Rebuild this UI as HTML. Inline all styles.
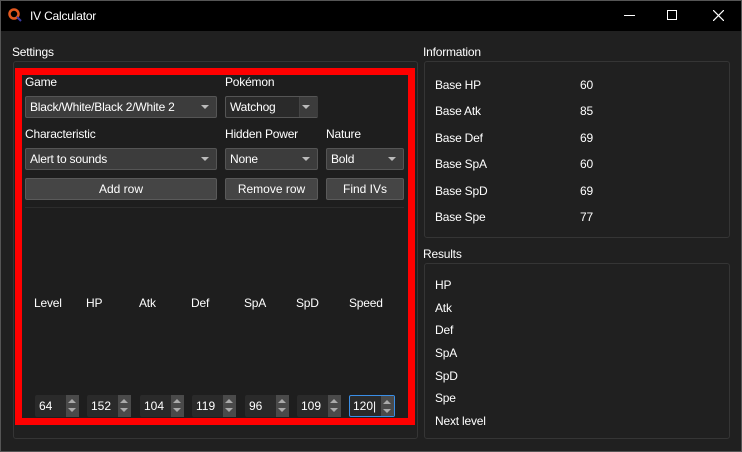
<!DOCTYPE html><html><head><style>
*{margin:0;padding:0;box-sizing:border-box}
body{width:742px;height:452px;background:#202020;font-family:"Liberation Sans",sans-serif;font-size:12px;color:#fff;position:relative;overflow:hidden}
.a{position:absolute}
.t{position:absolute;white-space:nowrap;line-height:14px;letter-spacing:-0.2px}
.grp{position:absolute;border:1px solid #353535;border-radius:3px}
.cb{position:absolute;height:22px;background:#3c3c3c;border:1px solid #555;border-radius:2px;padding-left:4px;line-height:20px;letter-spacing:-0.2px}
.cb:after{content:"";position:absolute;right:7px;top:8px;border-left:4px solid transparent;border-right:4px solid transparent;border-top:4px solid #bbb}
.btn{position:absolute;height:22px;background:#454545;border:1px solid #5a5a5a;border-radius:2px;text-align:center;line-height:20px}
.sp{position:absolute;top:395px;height:22px;width:44px;background:#2a2a2a;border-radius:2px;line-height:22px;padding-left:4px}
.sp i{position:absolute;right:0;top:0;width:13px;height:22px;background:#4a4a4a}
.sp i:before{content:"";position:absolute;left:2px;top:4px;border-left:4px solid transparent;border-right:4px solid transparent;border-bottom:4px solid #aaa}
.sp i:after{content:"";position:absolute;left:2px;top:13px;border-left:4px solid transparent;border-right:4px solid transparent;border-top:4px solid #aaa}
</style></head><body>
<div class="a" style="left:0;top:0;width:742px;height:31px;background:#000"></div>
<div class="a" style="left:0;top:0;width:742px;height:452px;border:1px solid #555;z-index:5"></div>
<svg class="a" style="left:8px;top:8px" width="14" height="14" viewBox="0 0 14 14"><circle cx="6" cy="6" r="4.5" fill="none" stroke="#e2571e" stroke-width="2.5"/><line x1="9" y1="9" x2="13" y2="13" stroke="#3a3aa0" stroke-width="2"/></svg>
<div class="t" style="left:30px;top:9px;font-size:12px">IV Calculator</div>
<div class="a" style="left:624px;top:15px;width:11px;height:1px;background:#fff"></div>
<div class="a" style="left:667px;top:10px;width:10px;height:10px;border:1px solid #fff"></div>
<svg class="a" style="left:713px;top:10px" width="11" height="11"><path d="M0 0L11 11M11 0L0 11" stroke="#fff" stroke-width="1.2"/></svg>

<div class="t" style="left:12px;top:45px">Settings</div>
<div class="grp" style="left:13px;top:61px;width:405px;height:378px"></div>
<div class="a" style="left:15px;top:68px;width:400px;height:357px;border:7px solid #f00;background:#1e1e1e"></div>
<div class="t" style="left:25px;top:75px">Game</div>
<div class="t" style="left:225px;top:75px">Pokémon</div>
<div class="cb" style="left:25px;top:96px;width:192px">Black/White/Black 2/White 2</div>
<div class="cb" style="left:225px;top:96px;width:93px;background:#2a2a2a">Watchog<span class="a" style="left:73px;top:0;width:1px;height:20px;background:#444"></span><span class="a" style="left:74px;top:0;width:18px;height:20px;background:#3c3c3c"></span></div>
<div class="t" style="left:25px;top:127px">Characteristic</div>
<div class="t" style="left:225px;top:127px">Hidden Power</div>
<div class="t" style="left:326px;top:127px">Nature</div>
<div class="cb" style="left:25px;top:148px;width:192px">Alert to sounds</div>
<div class="cb" style="left:225px;top:148px;width:93px">None</div>
<div class="cb" style="left:326px;top:148px;width:78px">Bold</div>
<div class="btn" style="left:25px;top:178px;width:192px">Add row</div>
<div class="btn" style="left:225px;top:178px;width:93px">Remove row</div>
<div class="btn" style="left:326px;top:178px;width:78px">Find IVs</div>
<div class="a" style="left:25px;top:207px;width:379px;height:1px;background:#2c2c2c"></div>
<div class="t" style="left:34px;top:296px">Level</div>
<div class="t" style="left:86px;top:296px">HP</div>
<div class="t" style="left:139px;top:296px">Atk</div>
<div class="t" style="left:191px;top:296px">Def</div>
<div class="t" style="left:244px;top:296px">SpA</div>
<div class="t" style="left:296px;top:296px">SpD</div>
<div class="t" style="left:349px;top:296px">Speed</div>
<div class="sp" style="left:35px">64<i></i></div>
<div class="sp" style="left:87px">152<i></i></div>
<div class="sp" style="left:140px">104<i></i></div>
<div class="sp" style="left:192px">119<i></i></div>
<div class="sp" style="left:245px">96<i></i></div>
<div class="sp" style="left:297px">109<i></i></div>
<div class="sp" style="left:349px;width:46px;border:1px solid #3a8ee6;line-height:20px;padding-left:3px">120|<i style="height:20px"></i></div>

<div class="t" style="left:423px;top:45px">Information</div>
<div class="grp" style="left:424px;top:61px;width:306px;height:177px"></div>
<div class="t" style="left:435px;top:78px">Base HP</div><div class="t" style="left:580px;top:78px">60</div>
<div class="t" style="left:435px;top:104px">Base Atk</div><div class="t" style="left:580px;top:104px">85</div>
<div class="t" style="left:435px;top:131px">Base Def</div><div class="t" style="left:580px;top:131px">69</div>
<div class="t" style="left:435px;top:157px">Base SpA</div><div class="t" style="left:580px;top:157px">60</div>
<div class="t" style="left:435px;top:184px">Base SpD</div><div class="t" style="left:580px;top:184px">69</div>
<div class="t" style="left:435px;top:210px">Base Spe</div><div class="t" style="left:580px;top:210px">77</div>

<div class="t" style="left:423px;top:247px">Results</div>
<div class="grp" style="left:424px;top:263px;width:306px;height:176px"></div>
<div class="t" style="left:435px;top:278px">HP</div>
<div class="t" style="left:435px;top:301px">Atk</div>
<div class="t" style="left:435px;top:323px">Def</div>
<div class="t" style="left:435px;top:346px">SpA</div>
<div class="t" style="left:435px;top:369px">SpD</div>
<div class="t" style="left:435px;top:391px">Spe</div>
<div class="t" style="left:435px;top:414px">Next level</div>
</body></html>
